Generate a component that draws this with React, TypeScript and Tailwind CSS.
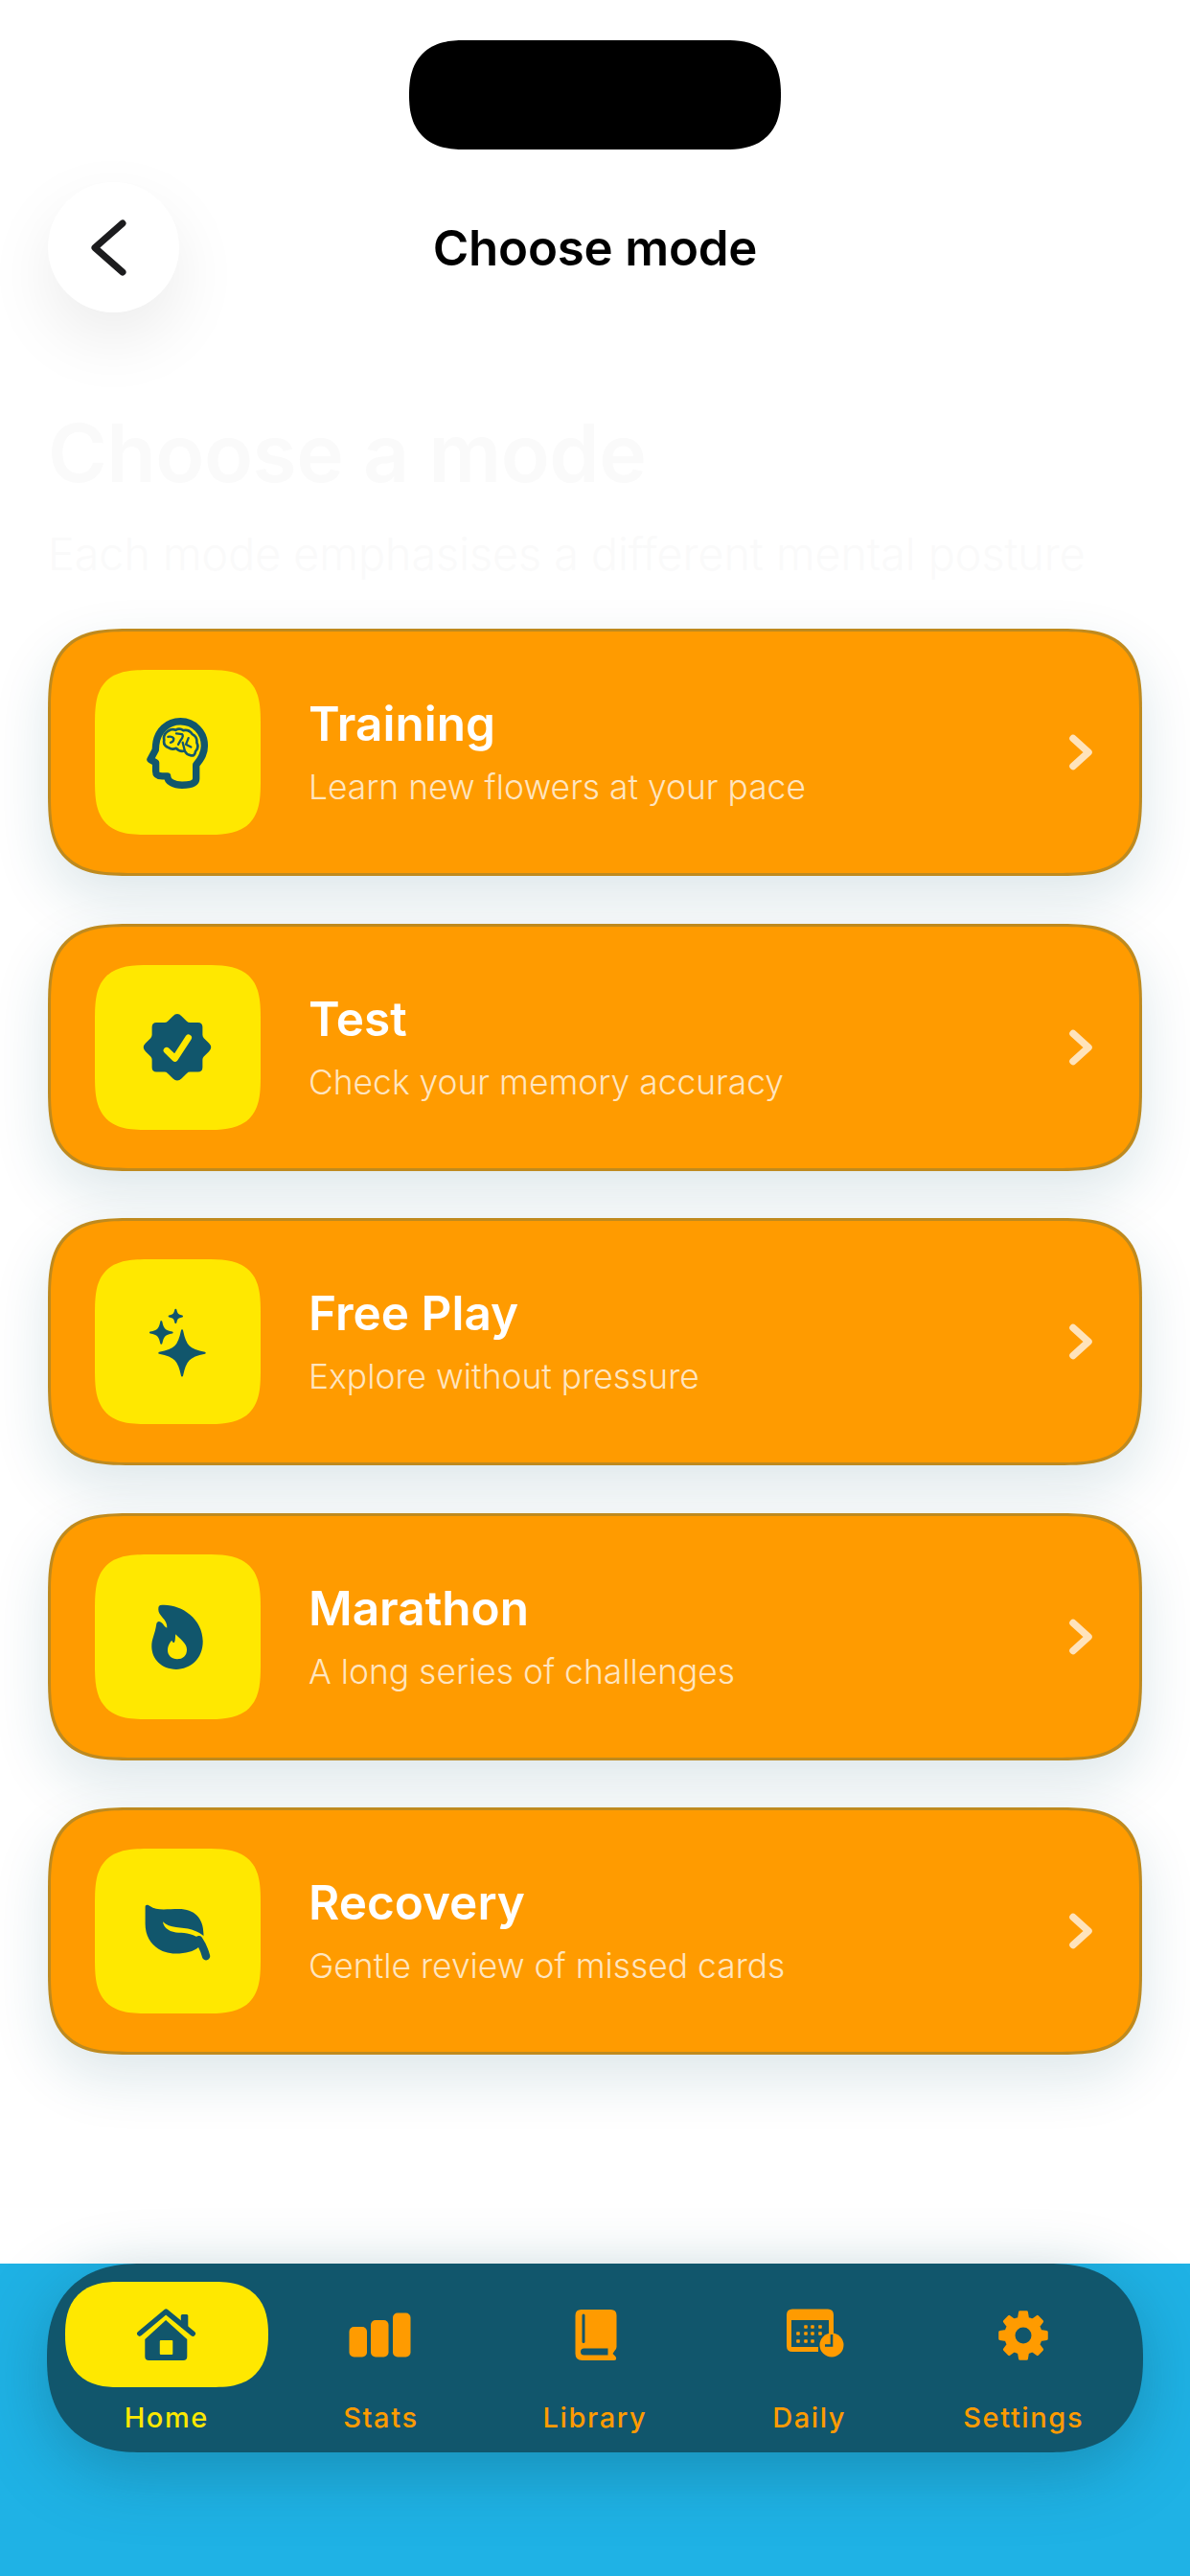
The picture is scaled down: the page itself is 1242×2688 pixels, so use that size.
import React from "react";

const DARK = "#11566C";
const YEL = "#FFE800";
const ORG = "#FF9B00";

function star(cx: number, cy: number, r: number) {
  const k = r * 0.14;
  const j = r * 0.3;
  return `M${cx} ${cy - r} C${cx + k} ${cy - j} ${cx + j} ${cy - k} ${cx + r} ${cy} C${cx + j} ${cy + k} ${cx + k} ${cy + j} ${cx} ${cy + r} C${cx - k} ${cy + j} ${cx - j} ${cy + k} ${cx - r} ${cy} C${cx - j} ${cy - k} ${cx - k} ${cy - j} ${cx} ${cy - r}Z`;
}

function gear(cx: number, cy: number, ro: number, ri: number, n: number) {
  const pts: string[] = [];
  for (let i = 0; i < n; i++) {
    const a = (i * 2 * Math.PI) / n - Math.PI / 2;
    const w = Math.PI / n;
    const p = (r: number, t: number) => `${(cx + r * Math.cos(t)).toFixed(2)} ${(cy + r * Math.sin(t)).toFixed(2)}`;
    pts.push(p(ri, a - w * 0.62), p(ro, a - w * 0.36), p(ro, a + w * 0.36), p(ri, a + w * 0.62));
  }
  return "M" + pts.join(" L") + "Z";
}

const tileSvg = "w-full h-full";

const BrainIcon = () => (
  <svg className={tileSvg} viewBox="58 55 517 515" fill="none">
    <path d="M374 352 C392 330 400 315 400 292 C400 250 368 216 325 216 C285 216 252 245 248 290 L247 305 L231 335 L248 345 L248 372 C248 383 255 387 268 387 L284 387 C284 405 305 415 330 415 C355 415 374 410 374 395 Z" stroke={DARK} strokeWidth="22" strokeLinejoin="round" />
    <path d="M285 247 Q298 238 310 243 Q322 236 334 244 Q352 240 362 256 Q378 264 376 282 Q384 298 372 310 Q370 326 356 322 Q344 320 338 308 Q322 312 312 300 Q298 306 288 298 Q270 292 274 274 Q270 258 285 247Z" stroke={DARK} strokeWidth="8" strokeLinejoin="round" />
    <path d="M286 264 Q300 262 304 270 Q304 280 294 282 M312 254 L330 256 Q336 262 326 274 L318 288 M350 268 L342 288 L358 296 M332 282 L338 306" stroke={DARK} strokeWidth="7" strokeLinecap="round" strokeLinejoin="round" />
  </svg>
);

const SealIcon = () => (
  <svg className={tileSvg} viewBox="58 48 517 515" fill="none">
    <path d="M315 201 Q322 201 329 208 L345 224 Q349 228 355 228 L380 228 Q394 228 394 242 L394 266 Q394 272 398 276 L414 292 Q427 305 414 318 L398 334 Q394 338 394 344 L394 368 Q394 382 380 382 L355 382 Q349 382 345 386 L329 402 Q315 415 301 402 L285 386 Q281 382 275 382 L250 382 Q236 382 236 368 L236 344 Q236 338 232 334 L216 318 Q203 305 216 292 L232 276 Q236 272 236 266 L236 242 Q236 228 250 228 L275 228 Q281 228 285 224 L301 208 Q308 201 315 201Z" fill={DARK} />
    <path d="M282 315 L308 340 L350 275" stroke={YEL} strokeWidth="20" strokeLinecap="round" strokeLinejoin="round" />
  </svg>
);

const SparkleIcon = () => (
  <svg className={tileSvg} viewBox="58 40 517 515" fill={DARK} stroke={DARK} strokeWidth="6" strokeLinejoin="round">
    <path d={star(330, 333, 71)} />
    <path d={star(265, 269, 34)} />
    <path d={star(310, 218, 20)} />
  </svg>
);

const FlameIcon = () => (
  <svg className={tileSvg} viewBox="58 33 517 515">
    <path d="M262 192 C320 185 395 230 395 305 C395 360 355 392 312 392 C265 392 235 360 235 320 C235 295 245 285 250 250 C252 240 262 240 270 250 C275 258 280 262 283 262 C285 235 255 225 256 205 C256 197 258 193 262 192Z" fill={DARK} />
    <path d="M310 282 C322 295 345 310 345 330 C345 350 332 360 315 360 C298 360 285 350 285 332 C285 320 292 308 298 302 C300 308 303 310 306 308 C310 300 308 290 310 282Z" fill={YEL} />
  </svg>
);

const LeafIcon = () => (
  <svg className={tileSvg} viewBox="58 55 517 515">
    <path d="M215 238 C215 229 222 229 230 235 C250 250 280 244 320 244 C370 244 400 275 397 330 L385 360 C370 375 345 383 310 383 C255 383 215 345 215 290Z" fill={DARK} />
    <path d="M270 283 C290 305 330 298 360 308 C380 315 392 322 400 330 L392 342 C370 322 340 318 320 318 C295 316 272 305 270 283Z" fill={YEL} />
    <path d="M382 340 C392 355 400 372 405 391" stroke={DARK} strokeWidth="25" strokeLinecap="round" fill="none" />
  </svg>
);

const navSvg = "w-[72px] h-[56px]";

const HomeIcon = () => (
  <svg className={navSvg} viewBox="137.7 2408 72 56" fill="none">
    <rect x="188.5" y="2415" width="7.5" height="14" rx="1.5" fill={DARK} />
    <path d="M145.5 2435 L173 2412 L201 2435" stroke={DARK} strokeWidth="5.5" strokeLinecap="round" strokeLinejoin="round" />
    <path d="M151 2441 L172.8 2421 L195 2441 L195 2459 Q195 2463 191 2463 L155 2463 Q151 2463 151 2459Z" fill={DARK} />
    <rect x="166.5" y="2442" width="13.5" height="15" rx="1" fill={YEL} />
  </svg>
);

const StatsIcon = () => (
  <svg className={navSvg} viewBox="361 2408 72 56" fill={ORG}>
    <rect x="364.5" y="2428" width="18.5" height="31.5" rx="5" />
    <rect x="387" y="2421" width="18.5" height="38.5" rx="5" />
    <rect x="410" y="2413.5" width="18.5" height="46" rx="5" />
  </svg>
);

const BookIcon = () => (
  <svg className={navSvg} viewBox="584.5 2408 72 56">
    <path d="M606 2410 H637 Q643 2410 643 2416 V2449 Q643 2451 641 2453 L639 2456 L642 2459 Q644 2463 640 2463 H607 Q600 2463 600 2456 V2416 Q600 2410 606 2410Z" fill={ORG} />
    <rect x="607" y="2414.5" width="3" height="30.5" rx="1.5" fill={DARK} />
    <path d="M609 2450.5 H634 V2457.5 H609 Q605.5 2457.5 605.5 2454 Q605.5 2450.5 609 2450.5Z" fill={DARK} />
  </svg>
);

const CalendarIcon = () => {
  const dots: [number, number][] = [
    [840, 2428], [847, 2428], [855, 2428],
    [832, 2435], [840, 2435], [847, 2435], [855, 2435],
    [832, 2443], [840, 2443], [847, 2443],
  ];
  return (
    <svg className={navSvg} viewBox="808 2408 72 56" fill="none">
      <path d="M826 2409.5 H863 Q869 2409.5 869 2415.5 V2436 H864 V2421 H825 V2449 H853 V2454 H826 Q820 2454 820 2448 V2415.5 Q820 2409.5 826 2409.5Z" fill={ORG} />
      {dots.map(([x, y]) => (
        <rect key={`${x}-${y}`} x={x - 1.8} y={y - 1.8} width="3.6" height="3.6" rx="0.8" fill={ORG} />
      ))}
      <circle cx="867" cy="2447" r="12.5" fill={ORG} />
      <path d="M867 2436 V2447.5 H860" stroke={DARK} strokeWidth="2.6" />
    </svg>
  );
};

const GearIcon = () => (
  <svg className={navSvg} viewBox="1033 2408 72 56" fill="none">
    <path d={gear(1069, 2437, 24.5, 18.5, 8)} fill={ORG} stroke={ORG} strokeWidth="3" strokeLinejoin="round" />
    <circle cx="1069" cy="2437" r="8.5" fill={DARK} />
  </svg>
);

const modes = [
  { title: "Training", sub: "Learn new flowers at your pace", Icon: BrainIcon },
  { title: "Test", sub: "Check your memory accuracy", Icon: SealIcon },
  { title: "Free Play", sub: "Explore without pressure", Icon: SparkleIcon },
  { title: "Marathon", sub: "A long series of challenges", Icon: FlameIcon },
  { title: "Recovery", sub: "Gentle review of missed cards", Icon: LeafIcon },
];

const navItems = [
  { label: "Home", Icon: HomeIcon, active: true },
  { label: "Stats", Icon: StatsIcon, active: false },
  { label: "Library", Icon: BookIcon, active: false },
  { label: "Daily", Icon: CalendarIcon, active: false },
  { label: "Settings", Icon: GearIcon, active: false },
];

export default function App() {
  return (
    <div className="w-[1242px] h-[2688px] flex flex-col bg-white overflow-hidden font-['Inter',sans-serif]">
      <div className="h-[2362px] flex flex-col px-[50px] pt-[42px]">
        <div className="mx-auto w-[388px] h-[114px] rounded-[57px] [corner-shape:superellipse(1.3)] bg-black" />

        <div className="mt-[34px] grid grid-cols-[137px_1fr_137px] items-center">
          <div className="w-[137px] h-[136px] rounded-full bg-white flex items-center justify-center shadow-[0_28px_70px_rgba(0,0,0,0.08)]">
            <svg className="w-[137px] h-[136px]" viewBox="49 190 137 136" fill="none">
              <path d="M127 233 L98 258.5 L127 284" stroke="#1C1C1E" strokeWidth="7" strokeLinecap="round" strokeLinejoin="round" />
            </svg>
          </div>
          <div className="pt-[2px] text-center text-[51px] leading-[60px] font-semibold text-black tracking-[-0.2px]">Choose mode</div>
        </div>

        <h1 className="mt-[99px] text-[84px] leading-[96px] font-semibold text-[#FAFAFA] tracking-[-0.5px]">Choose a mode</h1>
        <p className="mt-[29px] text-[46.6px] leading-[56px] font-light text-[#FAFAFA]">Each mode emphasises a different mental posture</p>

        <div className="mt-[50px] flex flex-col gap-[49.5px]">
          {modes.map(({ title, sub, Icon }) => (
            <div
              key={title}
              className="h-[258px] rounded-[88px] [corner-shape:superellipse(1.6)] bg-[#FF9B00] border-[3px] border-[#BF8A1E] flex items-center pl-[46px] pr-[49px] shadow-[0_24px_60px_rgba(17,86,108,0.14)]"
            >
              <div className="w-[173px] h-[172px] rounded-[58px] [corner-shape:superellipse(1.6)] bg-[#FFE800] shrink-0">
                <Icon />
              </div>
              <div className="flex-1 ml-[50px] flex flex-col">
                <div className="text-[49.5px] leading-[60px] font-semibold text-white">{title}</div>
                <div className="mt-[14px] text-[35.4px] leading-[46px] font-light text-white/75">{sub}</div>
              </div>
              <svg className="w-[24px] h-[38px]" viewBox="0 0 24 38" fill="none">
                <path d="M4 4.5 L20 19 L4 33.5" stroke="#FFE3BB" strokeWidth="7.5" strokeLinecap="round" strokeLinejoin="round" />
              </svg>
            </div>
          ))}
        </div>
      </div>

      <div className="flex-1 bg-[#1FB2E5] px-[49px]">
        <div className="h-[197px] rounded-[98px] [corner-shape:superellipse(1.25)] bg-[#11566C] grid grid-cols-5 gap-x-[12px] px-[19px] pt-[19px] shadow-[0_20px_70px_rgba(17,86,108,0.38)]">
          {navItems.map(({ label, Icon, active }) => (
            <div key={label} className="flex flex-col items-center">
              <div className={`w-full h-[110px] rounded-[55px] [corner-shape:superellipse(1.3)] flex items-center justify-center ${active ? "bg-[#FFE800]" : ""}`}>
                <Icon />
              </div>
              <div className={`mt-[12px] text-[29px] leading-[40px] font-medium tracking-[1.6px] ${active ? "text-[#FFE800]" : "text-[#FF9B00]"}`}>
                {label}
              </div>
            </div>
          ))}
        </div>
      </div>
    </div>
  );
}
